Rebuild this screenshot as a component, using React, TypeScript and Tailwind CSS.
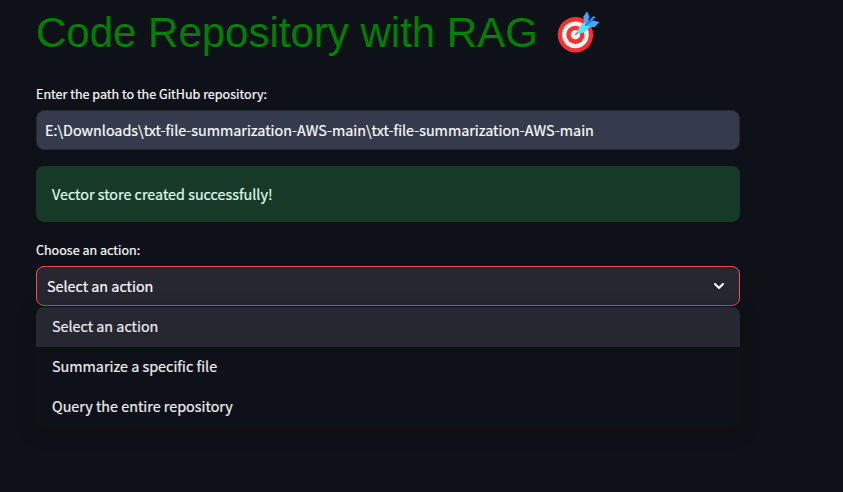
import React from "react";

const options = ["Select an action", "Summarize a specific file", "Query the entire repository"];

function TargetIcon() {
  return (
    <svg viewBox="0 0 44 44" className="mt-[10px] ml-[18px] h-11 w-11 shrink-0" aria-hidden="true">
      <circle cx="19.4" cy="24.8" r="17.7" fill="#f8312f" />
      <circle cx="19.4" cy="24.8" r="13.4" fill="#f4f4f4" />
      <circle cx="19.4" cy="24.8" r="9.1" fill="#f8312f" />
      <circle cx="19.4" cy="24.8" r="4.7" fill="#f4f4f4" />
      <path d="M19.8 24.3 24 20.5" stroke="#9b9b9b" strokeWidth="2" strokeLinecap="round" />
      <path d="M28.4 12.5 27.2 7 31 1.3 33.2 6.2 31.8 13Z" fill="#46a4fb" />
      <path d="M32 14 37 10.2 43.3 12.3 38.7 17 32.8 17.6Z" fill="#46a4fb" />
      <path d="M21.6 21.4 Q22.2 17.8 24.8 15.2 L28.6 12 33.8 17 30.2 21 Q27.2 23.6 22.8 23.7Z" fill="#50e2ff" />
      <path d="M30.2 14.9 37.7 7.4" stroke="#2688e8" strokeWidth="2.6" strokeLinecap="round" />
    </svg>
  );
}

export default function App() {
  return (
    <main className="h-[492px] w-[843px] overflow-hidden bg-[#0e1117] pl-9 font-['Noto_Sans_CJK_SC',sans-serif] text-[14.35px] text-[#fafafa] [-webkit-text-stroke:0.2px_currentColor]">
      <div className="w-[704px]">
        <header className="flex h-[83px]">
          <h1 className="mt-[8px] whitespace-nowrap font-['Liberation_Sans',Arial,sans-serif] text-[42px] leading-[50px] text-[#008000] [-webkit-text-stroke:0px]">
            Code Repository with RAG
          </h1>
          <TargetIcon />
        </header>
        <label htmlFor="path" className="block h-[27px] text-[12.55px] leading-[21px]">
          Enter the path to the GitHub repository:
        </label>
        <input
          id="path"
          readOnly
          value={"E:\\Downloads\\txt-file-summarization-AWS-main\\txt-file-summarization-AWS-main"}
          className="block h-10 w-full rounded-lg border border-[#262730] bg-[#343b4d] px-2 pb-[2px] outline-none"
        />
        <div className="mt-4 flex h-14 items-center rounded-lg bg-[#173928] px-4 text-[#dffde9]">
          Vector store created successfully!
        </div>
        <div className="mt-[17px] h-[27px] text-[12.55px] leading-[21px]">Choose an action:</div>
        <div className="relative">
          <div className="flex h-10 items-center justify-between rounded-lg border border-[#ff4b4b] bg-[#262730] pr-[15px] pl-[10px]">
            <span>Select an action</span>
            <svg viewBox="0 0 10 7" className="h-[7px] w-[10px]" fill="none" aria-hidden="true">
              <path d="m1 1 4 4 4-4" stroke="#fafafa" strokeWidth="2" strokeLinecap="round" strokeLinejoin="round" />
            </svg>
          </div>
          <ul className="absolute top-[41px] left-0 w-full overflow-hidden rounded-lg bg-[#0e1117] text-[#ececee] shadow-[0_4px_16px_rgba(17,17,17,0.75)]">
            {options.map((option, index) => (
              <li key={option} className={`flex h-10 items-center px-4 pb-[2px] ${index === 0 ? "bg-[#262730]" : ""}`}>
                {option}
              </li>
            ))}
          </ul>
        </div>
      </div>
    </main>
  );
}
